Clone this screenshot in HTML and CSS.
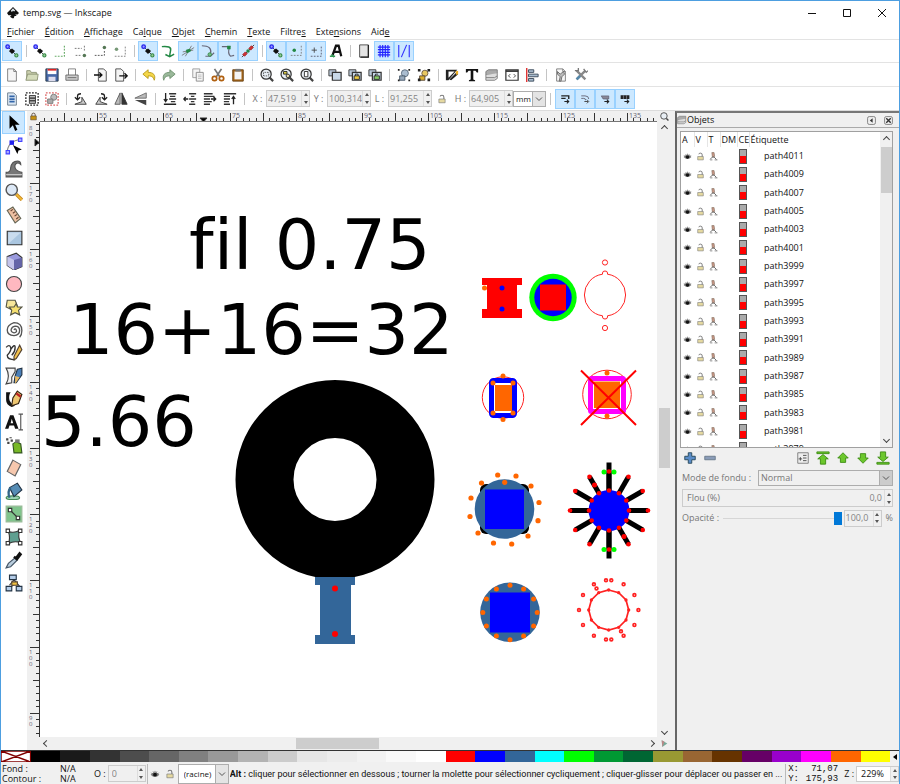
FILE: index.html
```html
<!DOCTYPE html>
<html lang="fr">
<head>
    <meta charset="UTF-8">
    <meta name="viewport" content="width=device-width, initial-scale=1.0">
    <title>temp.svg — Inkscape</title>
    <link rel="stylesheet" href="styles.css">
</head>
<body>
    <div class="window">
        <header class="titlebar">
            <svg class="logo" viewBox="0 0 16 16"><path d="M8 0 16 8 14 10 11 10 13 12 10 12 9 15 7 15 4 13 6 11 2 11 0 8Z" fill="#111"/><path d="M8 1.500 11 5 9.500 6 8 5 6.500 6.500 5 5Z" fill="#dde4ea"/></svg>
            <h1>temp.svg — Inkscape</h1>
            <div class="window-buttons">
                <button type="button" aria-label="Réduire"><svg viewBox="0 0 10 10"><path d="M1 5.500h8"/></svg></button>
                <button type="button" aria-label="Agrandir"><svg viewBox="0 0 10 10"><path d="M1.500 1.500h7v7h-7z"/></svg></button>
                <button type="button" aria-label="Fermer"><svg viewBox="0 0 10 10"><path d="M1 1l8 8M9 1L1 9"/></svg></button>
            </div>
        </header>

        <nav class="menubar">
            <a href="#"><u>F</u>ichier</a>
            <a href="#"><u>É</u>dition</a>
            <a href="#"><u>A</u>ffichage</a>
            <a href="#">Ca<u>l</u>que</a>
            <a href="#"><u>O</u>bjet</a>
            <a href="#"><u>C</u>hemin</a>
            <a href="#"><u>T</u>exte</a>
            <a href="#">Filtre<u>s</u></a>
            <a href="#">Exte<u>n</u>sions</a>
            <a href="#">Aid<u>e</u></a>
        </nav>

        <div class="toolbar snap-bar" data-tools="snap"></div>
        <div class="toolbar" data-tools="commands"></div>
        <div class="toolbar">
            <div class="tool-group" data-tools="select"></div>
            <label class="field-label" for="pos-x">X :</label>
            <div class="spin"><input id="pos-x" type="text" value="47,519" disabled></div>
            <label class="field-label" for="pos-y">Y :</label>
            <div class="spin"><input id="pos-y" type="text" value="100,314" disabled></div>
            <label class="field-label" for="size-w">L :</label>
            <div class="spin"><input id="size-w" type="text" value="91,255" disabled></div>
            <button class="tool ratio" type="button" aria-label="Verrouiller les proportions" data-icon="lock"></button>
            <label class="field-label" for="size-h">H :</label>
            <div class="spin"><input id="size-h" type="text" value="64,905" disabled></div>
            <div class="combo unit">
                <select aria-label="Unité"><option>mm</option><option>px</option></select>
            </div>
            <div class="tool-group affect" data-tools="affect"></div>
        </div>

        <main class="workspace">
            <div class="toolbox" data-tools="toolbox"></div>

            <div class="editor">
                <div class="corner" data-icon="padlock"></div>
                <svg class="ruler-h" id="ruler-h"></svg>
                <div class="corner" data-icon="zoom"></div>

                <svg class="ruler-v" id="ruler-v"></svg>
                <svg class="canvas" id="canvas">
                    <g transform="translate(-40 -122)">
                        <g class="drawing-text">
                            <text x="189" y="269">fil 0.75</text>
                            <text x="69" y="354">16+16=32</text>
                            <text x="41" y="446">5.66</text>
                        </g>

                        <!-- ring and its spool -->
                        <circle cx="335" cy="479.500" r="70.500" fill="none" stroke="#000" stroke-width="58"/>
                        <path d="M315 577h40v8h-4v50h4v9h-40v-9h5v-50h-5z" fill="#369"/>
                        <g fill="#f00"><circle cx="335" cy="588.500" r="3"/><circle cx="335" cy="634" r="3"/></g>

                        <!-- red spool -->
                        <path d="M482 278h40v7h-5v24h5v9h-40v-9h5v-24h-5z" fill="#f00"/>
                        <circle cx="484.500" cy="288" r="2.500" fill="#f60"/>
                        <g fill="#00f"><circle cx="502" cy="288" r="2.500"/><circle cx="502" cy="309" r="2.500"/></g>

                        <!-- green disc -->
                        <circle cx="553" cy="297.500" r="23.700" fill="#0f0"/>
                        <circle cx="553" cy="297.500" r="18.700" fill="#00f"/>
                        <path d="M540 284.500h26v26h-26z" fill="#f00"/>

                        <!-- notched outline -->
                        <g fill="none" stroke="#f22" stroke-width="1">
                            <path d="M607.500 274.200V273a2.500 2 0 0 0-5 0v1.200A21 21 0 0 0 602.500 315.800v1.200a2.500 2 0 0 0 5 0v-1.200A21 21 0 0 0 607.500 274.200Z"/>
                            <circle cx="605" cy="262.500" r="2.600"/><circle cx="605" cy="328" r="2.600"/>
                        </g>

                        <!-- blue frame -->
                        <circle cx="503" cy="397.500" r="20.700" fill="none" stroke="#f22"/>
                        <rect x="491.500" y="380.500" width="23" height="35" rx="2" fill="#fff" stroke="#00f" stroke-width="5"/>
                        <path d="M495 385h17v26h-17z" fill="#f60"/>
                        <g fill="#f60"><circle cx="503" cy="376" r="2.500"/><circle cx="493" cy="383" r="2.500"/><circle cx="513" cy="383" r="2.500"/><circle cx="493" cy="413" r="2.500"/><circle cx="513" cy="413" r="2.500"/><circle cx="503" cy="419.500" r="2.500"/></g>

                        <!-- crossed magenta frame -->
                        <circle cx="607" cy="394.500" r="24.300" fill="none" stroke="#f22"/>
                        <rect x="590.500" y="378.500" width="33" height="33" rx="1" fill="#fff" stroke="#f0f" stroke-width="5"/>
                        <path d="M594 381.500h26v26.500h-26z" fill="#f60"/>
                        <g fill="#f60"><circle cx="607" cy="373" r="2.500"/><circle cx="607" cy="416" r="2.500"/></g>
                        <path d="M581 370.500 636 425M636 370.500 581 425" stroke="#f00" stroke-width="2"/>

                        <!-- steel disc, dots outside -->
                        <rect x="480" y="484" width="49" height="50" rx="6"/>
                        <circle cx="504.500" cy="509" r="29.800" fill="#369"/>
                        <path d="M485 489.500h39v39.500h-39z" fill="#00f"/>
                        <g fill="#f60">
                            <circle cx="497.700" cy="475" r="2.600"/><circle cx="516" cy="476" r="2.600"/><circle cx="481.500" cy="483" r="2.600"/><circle cx="531" cy="486" r="2.600"/><circle cx="539" cy="502.500" r="2.600"/><circle cx="538" cy="520.700" r="2.600"/><circle cx="528" cy="536" r="2.600"/><circle cx="511.700" cy="544" r="2.600"/><circle cx="493.500" cy="543" r="2.600"/><circle cx="478" cy="533" r="2.600"/><circle cx="470" cy="516.500" r="2.600"/><circle cx="471" cy="498" r="2.600"/><circle cx="504.700" cy="482.300" r="2.600"/>
                        </g>

                        <g id="star"></g>

                        <!-- steel disc, dots inside -->
                        <circle cx="510" cy="612.300" r="29.800" fill="#369"/>
                        <path d="M490 592.500h40v40h-40z" fill="#00f"/>
                        <g id="disc-dots" fill="#f60"></g>

                        <g id="burst" fill="none" stroke="#f22" stroke-width="1.700"></g>
                    </g>
                </svg>
                <div class="scroll-v">
                    <span class="arrow up"></span>
                    <span class="thumb"></span>
                    <span class="arrow down"></span>
                </div>

                <div></div>
                <div class="scroll-h">
                    <span class="arrow left"></span>
                    <span class="thumb"></span>
                    <span class="arrow right"></span>
                </div>
                <div class="corner" data-icon="cms"></div>
            </div>

            <aside class="panel">
                <div class="panel-title">
                    <span class="panel-icon" data-icon="layers"></span>
                    <h2>Objets</h2>
                    <button type="button" aria-label="Réduire le panneau" data-icon="dock"></button>
                    <button type="button" aria-label="Fermer le panneau" data-icon="close"></button>
                </div>

                <div class="tree">
                    <div class="tree-view">
                        <table>
                            <thead>
                                <tr><th>A</th><th>V</th><th>T</th><th>DM</th><th>CE</th><th>Étiquette</th></tr>
                            </thead>
                            <tbody id="objects"></tbody>
                        </table>
                    </div>
                    <div class="tree-scroll">
                        <span class="arrow up"></span>
                        <span class="thumb"></span>
                        <span class="arrow down"></span>
                    </div>
                </div>

                <div class="panel-actions" data-tools="objects"></div>

                <div class="panel-row">
                    <label for="blend">Mode de fondu :</label>
                    <div class="combo blend">
                        <select id="blend" disabled><option>Normal</option></select>
                    </div>
                </div>
                <div class="panel-row">
                    <div class="spin blur">
                        <label for="blur">Flou (%)</label>
                        <input id="blur" type="text" value="0,0" disabled>
                    </div>
                </div>
                <div class="panel-row">
                    <label for="opacity">Opacité :</label>
                    <input id="opacity" type="range" min="0" max="100" value="100">
                    <div class="spin opacity"><input type="text" value="100,0" aria-label="Opacité" disabled></div>
                    <span>%</span>
                </div>
            </aside>
        </main>

        <div class="palette">
            <div class="swatches" id="swatches"></div>
            <button class="palette-menu" type="button" aria-label="Palettes"><span class="arrow-solid"></span></button>
        </div>

        <footer class="statusbar">
            <dl class="style-info">
                <dt>Fond :</dt><dd>N/A</dd>
                <dt>Contour :</dt><dd>N/A</dd>
            </dl>
            <label for="master-opacity">O :</label>
            <div class="spin master"><input id="master-opacity" type="text" value="0" disabled></div>
            <div class="layer">
                <button class="tool small" type="button" aria-label="Visibilité du calque" data-icon="eye"></button>
                <button class="tool small" type="button" aria-label="Verrouiller le calque" data-icon="lock"></button>
                <div class="combo root">
                    <select aria-label="Calque"><option>(racine)</option></select>
                </div>
            </div>
            <p class="message"><b>Alt :</b> cliquer pour sélectionner en dessous ; tourner la molette pour sélectionner cycliquement ; cliquer-glisser pour déplacer ou passer en ...</p>
            <dl class="coords">
                <dt>X:</dt><dd>71,07</dd>
                <dt>Y:</dt><dd>175,93</dd>
            </dl>
            <label for="zoom">Z :</label>
            <div class="spin zoom"><input id="zoom" type="text" value="229%"></div>
        </footer>
    </div>
    <script src="script.js"></script>
</body>
</html>
```

FILE: styles.css
```css
* {
    box-sizing: border-box;
}

body {
    margin: 0;
    font-family: "Open Sans", "Noto Sans", sans-serif;
    font-size: 9px;
    line-height: 12px;
    color: #111;
    background-color: #fff;
}

button,
input,
select {
    font: inherit;
    color: inherit;
    margin: 0;
    padding: 0;
    border: none;
    border-radius: 0;
    background: none;
}

svg {
    display: block;
}

h1,
h2,
p,
dl,
dd {
    margin: 0;
    font-size: inherit;
    font-weight: normal;
}

.window {
    display: flex;
    flex-direction: column;
    height: 100vh;
    border: 1px solid #4d9ee0;
    border-bottom: none;
    overflow: hidden;
}

/* Title and menus */
.titlebar {
    display: flex;
    align-items: center;
    height: 23px;
    padding-left: 6px;
    flex: none;
}

.logo {
    width: 12px;
    height: 12px;
    margin-right: 4px;
}

.window-buttons {
    display: flex;
    margin-left: auto;
}

.window-buttons button {
    width: 35px;
    height: 22px;
    display: flex;
    align-items: center;
    justify-content: center;
}

.window-buttons svg {
    width: 10px;
    height: 10px;
    fill: none;
    stroke: #111;
    stroke-width: 1;
}

.menubar {
    display: flex;
    gap: 10px;
    height: 15px;
    padding: 2px 6px 0;
    flex: none;
}

.menubar a {
    color: #111;
    text-decoration: none;
}

/* Toolbars */
.toolbar {
    display: flex;
    align-items: center;
    height: 24px;
    padding-left: 1px;
    border-top: 1px solid #e3e3e3;
    flex: none;
}

.toolbar.snap-bar {
    height: 23px;
}

.tool-group {
    display: flex;
    align-items: center;
}

.tool {
    display: flex;
    align-items: center;
    justify-content: center;
    width: 20px;
    height: 20px;
    flex: none;
}

.tool svg {
    width: 14px;
    height: 14px;
}

.tool.active {
    background-color: #cce8ff;
    border: 1px solid #99d1ff;
}

.tool.small {
    width: 15px;
}

.tool.small svg,
.tool.ratio svg,
.affect .tool svg {
    width: 10px;
    height: 10px;
}

.separator {
    width: 9px;
    height: 12px;
    flex: none;
    background: linear-gradient(#c4c4c4, #c4c4c4) center / 1px 100% no-repeat;
}

.separator.narrow {
    width: 8px;
}

.field-label {
    width: 17px;
    text-align: center;
    color: #777;
}

/* Entry with up and down arrows */
.spin {
    display: flex;
    width: 44px;
    height: 17px;
    border: 1px solid #ccc;
    background-color: #f0f0f0;
    flex: none;
}

.spin input {
    flex: 1;
    min-width: 0;
    padding-left: 1px;
}

.spin input:disabled {
    color: #838383;
}

.spin-buttons {
    display: flex;
    flex-direction: column;
    width: 8px;
    border-left: 1px solid #ddd;
}

.spin-buttons button {
    flex: 1;
    display: flex;
    align-items: center;
    justify-content: center;
}

.spin-buttons button::before {
    content: "";
    border: 2px solid transparent;
    border-top: none;
    border-bottom: 3px solid #555;
}

.spin-buttons button + button::before {
    border-top: 3px solid #555;
    border-bottom: none;
}

/* Drop-down */
.combo {
    position: relative;
    height: 16px;
    border: 1px solid #adadad;
    background-color: #fff;
}

.combo select {
    appearance: none;
    width: 100%;
    height: 100%;
    padding-left: 2px;
    opacity: 1;
}

.combo::after {
    content: "";
    position: absolute;
    top: 0;
    right: 0;
    width: 12px;
    height: 100%;
    border-left: 1px solid #adadad;
    pointer-events: none;
    background: #e4e4e4 url("data:image/svg+xml,%3Csvg xmlns='http://www.w3.org/2000/svg' viewBox='0 0 8 8'%3E%3Cpath d='M1 2.500 4 5.500 7 2.500' fill='none' stroke='%23555'/%3E%3C/svg%3E") center / 8px no-repeat;
}

.combo.unit {
    width: 33px;
}

.combo.unit select {
    font-size: 8px;
}

/* Work area */
.workspace {
    display: flex;
    flex: 1;
    min-height: 0;
    border-top: 1px solid #dcdcdc;
}

.toolbox {
    width: 26px;
    padding-left: 1px;
    flex: none;
}

.toolbox .tool {
    width: 23px;
    height: 23px;
}

.toolbox .tool svg {
    width: 18px;
    height: 18px;
}

.editor {
    display: grid;
    grid-template-columns: 13px 1fr 14px;
    grid-template-rows: 11px 1fr 13px;
    flex: 1;
    min-width: 0;
    background-color: #f0f0f0;
}

.corner {
    display: flex;
    align-items: center;
    justify-content: center;
}

.corner svg {
    width: 9px;
    height: 9px;
}

.ruler-h,
.ruler-v {
    width: 100%;
    height: 100%;
    overflow: hidden;
    fill: #667;
}

.ruler-h {
    border-bottom: 1px solid #777;
    font-size: 7px;
}

.ruler-v {
    border-right: 1px solid #333;
    font-size: 6px;
}

.ruler-h path,
.ruler-v path {
    stroke: #333;
    stroke-width: 1;
}

.marker {
    fill: #000;
}

.canvas {
    width: 100%;
    height: 100%;
    background-color: #fff;
    overflow: hidden;
}

.drawing-text {
    font-family: "DejaVu Sans", sans-serif;
    font-size: 70px;
    font-variant-ligatures: none;
}

.scroll-v,
.tree-scroll {
    display: grid;
    grid-template-rows: 12px 1fr 12px;
    justify-items: center;
    align-items: center;
    background-color: #f0f0f0;
}

.scroll-v .thumb {
    width: 11px;
    height: 10%;
    margin-top: 17px;
    background-color: #cdcdcd;
}

.scroll-h {
    display: grid;
    grid-template-columns: 12px 1fr 12px;
    justify-items: center;
    align-items: center;
}

.scroll-h .thumb {
    width: 14%;
    height: 11px;
    margin-right: 22px;
    background-color: #cdcdcd;
}

.arrow {
    width: 5px;
    height: 5px;
    border: solid #444;
    border-width: 1px 0 0 1px;
}

.arrow.up {
    transform: rotate(45deg);
}

.arrow.right {
    transform: rotate(135deg);
}

.arrow.down {
    transform: rotate(225deg);
}

.arrow.left {
    transform: rotate(315deg);
}

/* Objects panel */
.panel {
    width: 224px;
    margin-left: 4px;
    border-left: 2px solid #666;
    border-top: 2px solid #777;
    background-color: #f0f0f0;
    box-shadow: -4px 0 #f0f0f0;
    flex: none;
}

.panel-title {
    display: flex;
    align-items: center;
    height: 15px;
    padding-right: 6px;
    border-bottom: 1px solid #aaa;
}

.panel-icon svg {
    width: 10px;
    height: 10px;
}

.panel-title h2 {
    flex: 1;
}

.panel-title button {
    margin-left: 8px;
}

.panel-title button svg {
    width: 9px;
    height: 9px;
}

.tree {
    display: flex;
    height: 317px;
    margin: 3px 6px 0 3px;
    border: 1px solid #a0a0a0;
    background-color: #fff;
}

.tree-view {
    flex: 1;
    overflow: hidden;
}

.tree-scroll {
    width: 12px;
    grid-template-rows: 15px 1fr 15px;
}

.tree-scroll .thumb {
    width: 11px;
    height: 46px;
    align-self: start;
    background-color: #cdcdcd;
}

.tree table {
    width: 100%;
    table-layout: fixed;
    border-collapse: collapse;
}

.tree th {
    height: 15px;
    padding: 0 0 0 1px;
    font-weight: normal;
    text-align: left;
    white-space: nowrap;
    border-right: 1px solid #e5e5e5;
}

.tree th:nth-child(-n + 3) {
    width: 13px;
}

.tree th:nth-child(4) {
    width: 17px;
}

.tree th:nth-child(5) {
    width: 12px;
}

.tree th:last-child {
    border-right: none;
}

.tree td {
    height: 18px;
    padding: 0 0 0 2px;
}

.tree tr:nth-child(3n) td {
    height: 19px;
}

.tree td svg {
    width: 9px;
    height: 9px;
}

.tree td:last-child {
    padding-left: 15px;
}

.color-tag {
    display: block;
    width: 8px;
    height: 15px;
    border: 1px solid #555;
    background: linear-gradient(#aaa 50%, #f00 50%);
}

.panel-actions {
    display: flex;
    height: 20px;
    padding: 0 6px 0 3px;
}

.panel-actions .tool:nth-child(3) {
    margin-left: auto;
}

.panel-row {
    display: flex;
    align-items: center;
    gap: 4px;
    height: 20px;
    padding: 0 6px 0 5px;
    color: #777;
}

.combo.blend {
    flex: 1;
    margin-left: 3px;
    background-color: #f0f0f0;
}

.combo.blend::after {
    background-color: #ccc;
}

.spin.blur {
    flex: 1;
    height: 18px;
    line-height: 16px;
    padding-left: 4px;
}

.spin.blur input {
    text-align: right;
    padding-right: 2px;
}

#opacity {
    appearance: none;
    flex: 1;
    min-width: 0;
    height: 13px;
    background: linear-gradient(#d6d6d6, #d6d6d6) center / 100% 1px no-repeat;
}

#opacity::-webkit-slider-thumb {
    appearance: none;
    width: 8px;
    height: 13px;
    background-color: #0078d7;
}

.spin.opacity {
    width: 38px;
    margin-left: -2px;
}

/* Palette */
.palette {
    display: flex;
    height: 13px;
    border-top: 1px solid #333;
    background-color: #f0f0f0;
    flex: none;
}

.swatches {
    display: flex;
    flex: 1;
    height: 11px;
}

.swatch {
    flex: 1 1 0;
    min-width: 0;
}

.swatch svg {
    width: 100%;
    height: 100%;
    background-color: #fff;
}

.palette-menu {
    width: 9px;
    padding-left: 3px;
}

.arrow-solid {
    display: block;
    width: 0;
    border: 3px solid transparent;
    border-left: none;
    border-right: 4px solid #000;
}

/* Status bar */
.statusbar {
    display: flex;
    align-items: center;
    height: 21px;
    background-color: #f0f0f0;
    flex: none;
}

.style-info,
.coords {
    display: grid;
    line-height: 10px;
    flex: none;
}

.style-info {
    grid-template-columns: 58px 34px;
    padding-left: 1px;
}

.spin.master {
    width: 38px;
    margin-left: 2px;
}

.spin.master input {
    padding-left: 3px;
}

.layer {
    display: flex;
    align-items: center;
    margin-left: 1px;
    border-left: 1px solid #bbb;
}

.combo.root {
    width: 51px;
    height: 20px;
    font-size: 8px;
}

.combo.root select {
    padding-left: 5px;
}

.message {
    flex: 1;
    min-width: 0;
    margin-left: 1px;
    font-family: Roboto, "Open Sans", sans-serif;
    white-space: nowrap;
    overflow: hidden;
    text-overflow: ellipsis;
}

.coords {
    grid-template-columns: 14px 36px;
    padding-left: 2px;
    margin-right: 6px;
    border-left: 1px solid #bbb;
    font-family: "Liberation Mono", monospace;
}

.coords dd {
    text-align: right;
}

.spin.zoom {
    width: 43px;
    height: 16px;
    margin-left: 2px;
    background-color: #fff;
}

.spin.zoom input {
    padding-left: 4px;
}

.spin.zoom .spin-buttons {
    background-color: #f0f0f0;
}
```

FILE: script.js
```js
// Icons, drawn on a 16 x 16 grid
const page = '<path d="M3 1h7l3 3v11H3z" fill="#f6f6f6" stroke="#777"/><path d="M10 1v3h3" fill="none" stroke="#777"/>';
const nodes = '<path d="M3 3 13 13" stroke="#333"/><circle cx="3" cy="3" r="2" fill="#99f" stroke="#22e" stroke-width="1.500"/><path d="M8 5l3.500 3L8 11.500 4.500 8z" fill="#111"/><circle cx="13" cy="13" r="1.800" fill="#9c9" stroke="#384" stroke-width="1.300"/>';
const glass = '<path d="M11 11l4 4" stroke="#444" stroke-width="2.500"/><circle cx="7" cy="7" r="5.800" fill="#e8eef4" stroke="#333" stroke-width="1.400"/>';
const squares = '<path d="M1 2h8v7H1z" fill="#b8c6d6" stroke="#333"/><path d="M5 5h10v9H5z" fill="#c8d8e8" stroke="#333" stroke-width="1.400"/>';
const dashedBox = '<path d="M1 1h14v14H1z" fill="none" stroke="#222" stroke-width="1.500" stroke-dasharray="2 1.500"/>';
const handles = '<path d="M1 1h3v3H1zM12 1h3v3h-3zM1 12h3v3H1zM12 12h3v3h-3z" fill="#222"/>';
const lines = '<path d="M7 2h8M9 5h4M7 8h8M9 11h4M7 14h7" stroke="#333" stroke-width="1.500"/>';

const icons = {
    'snap': nodes,
    'snap-bbox': nodes,
    'snap-edge': '<path d="M13 2v12H2" fill="none" stroke="#6a6" stroke-width="1.300" stroke-dasharray="2 1.500"/>',
    'snap-corner': '<path d="M2 5h8M13 2v7M3 13h7" fill="none" stroke="#666" stroke-dasharray="2 1.500"/><circle cx="13" cy="13" r="2" fill="#575"/>',
    'snap-mid': '<path d="M2 13h11V7" fill="none" stroke="#444" stroke-dasharray="2 1.500"/><circle cx="13" cy="4" r="2" fill="#575"/>',
    'snap-center': '<path d="M2 14h12V2" fill="none" stroke="#777" stroke-dasharray="2 1.500"/><circle cx="4" cy="6" r="2" fill="#797"/>',
    'snap-path': '<path d="M1 3q11-1 10 4t-1 7M5 12l5 2.500 5-3" fill="none" stroke="#284" stroke-width="1.700"/>',
    'snap-cross': '<path d="M1 13 15 4M2 9l12-2M5 14l7-12" stroke="#777"/><path d="M6 7l4-1 1 2-4 2z" fill="#284" stroke="#284"/>',
    'snap-cusp': '<path d="M1 2q12 0 10 9M5 14h6l4-4" fill="none" stroke="#667" stroke-width="1.300"/><circle cx="10" cy="12" r="2" fill="#7b8" stroke="#384"/>',
    'snap-smooth': '<path d="M1 3h9q-3 8 1 11l4-1" fill="none" stroke="#667" stroke-width="1.300"/><path d="M7 2h4v4H7z" fill="#284"/>',
    'snap-line': '<path d="M1 15 15 1" stroke="#333"/><path d="M2 12l3-3 2 2-3 3zM9 5l3-3 2 2-3 3z" fill="#c33" stroke="#a22"/><circle cx="8" cy="8" r="2" fill="#284"/>',
    'snap-object': '<path d="M2 13h12V2" fill="none" stroke="#777" stroke-dasharray="2 1.500"/><circle cx="6" cy="7" r="2" fill="#284"/>',
    'snap-rotation': '<path d="M2 14h12V2" fill="none" stroke="#556" stroke-dasharray="2 1.500"/><path d="M6 4v6M3 7h6" stroke="#444"/>',
    'snap-text': '<path d="M4 13 8 2h3l3 12M6 9h7" fill="none" stroke="#111" stroke-width="2.600"/><path d="M1 14h6M3 12l3 3" stroke="#395" stroke-width="1.700"/>',
    'snap-page': '<path d="M3 1h10v14H3z" fill="#e4e4e4" stroke="#444"/><path d="M13 1v14H4" fill="none" stroke="#222" stroke-width="1.500"/>',
    'snap-grid': '<path d="M1 3.500h14M1 6.500h14M1 9.500h14M1 12.500h14M3.500 1v14M6.500 1v14M9.500 1v14M12.500 1v14" stroke="#22f" stroke-width="1.300"/>',
    'snap-guide': '<path d="M2 1v14M14 1v14M5 15 11 1" stroke="#33f" stroke-width="1.300"/>',

    'new': page,
    'open': '<path d="M2 13V3h4l1 2h6v3" fill="#ccd0b0" stroke="#889070"/><path d="M1 14 3 7h12l-1 7z" fill="#d5dcbb" stroke="#889070"/>',
    'save': '<path d="M1 1h14v14H1z" fill="#4668a8" stroke="#234"/><path d="M3 1h10v6H3z" fill="#fff"/><path d="M3 1h10v2H3z" fill="#d22"/><path d="M4 10h8v5H4z" fill="#dde"/>',
    'print': '<path d="M4 8V1h8v7" fill="#fff" stroke="#777"/><path d="M1 8h14v6H1z" fill="#ccc" stroke="#666"/><path d="M3 11h10" stroke="#666"/>',
    'import': '<path d="M5 1h6l3 3v11H5z" fill="#f4f4f4" stroke="#444"/><path d="M0 8h8M6 5l3 3-3 3" fill="none" stroke="#111" stroke-width="1.600"/>',
    'export': '<path d="M2 1h6l3 3v11H2z" fill="#f4f4f4" stroke="#444"/><path d="M6 9h8M12 6l3 3-3 3" fill="none" stroke="#111" stroke-width="1.600"/>',
    'undo': '<path d="M1 7 7 2v3c6 0 9 3 7 9-1-4-3-5-7-5v3z" fill="#f4d648" stroke="#b59616"/>',
    'redo': '<path d="M15 7 9 2v3C3 5 0 8 2 14c1-4 3-5 7-5v3z" fill="#9ab89a" stroke="#6d906d"/>',
    'copy': '<path d="M2 1h8v10H2z" fill="#f4f4f4" stroke="#999"/><path d="M6 5h8v10H6z" fill="#f4f4f4" stroke="#888"/><path d="M8 8h4M8 10h4M8 12h4" stroke="#bbb"/>',
    'cut': '<path d="M4 1l6 9M12 1 6 10" stroke="#777" stroke-width="2"/><circle cx="4" cy="12" r="2.500" fill="none" stroke="#b06010" stroke-width="2"/><circle cx="12" cy="12" r="2.500" fill="none" stroke="#b06010" stroke-width="2"/>',
    'paste': '<path d="M2 2h12v13H2z" fill="#a8681c" stroke="#643c0c"/><path d="M4 4h8v9H4z" fill="#f4f4f4"/><path d="M5 1h6v3H5z" fill="#777"/>',
    'zoom-sel': glass + '<path d="M4 5h6v4H4z" fill="none" stroke="#333" stroke-dasharray="1 1"/>',
    'zoom-draw': glass + '<path d="M4 4h4v3H4z" fill="#dc4" stroke="#222"/><circle cx="9" cy="9" r="2" fill="#eda" stroke="#222"/>',
    'zoom-page': glass + '<path d="M5 4h4v6H5z" fill="#fff" stroke="#222"/>',
    'duplicate': squares,
    'clone': squares + '<path d="M7 9h6v4H7z" fill="#ec4" stroke="#222"/><path d="M8.500 9V7h3v2" fill="none" stroke="#222"/>',
    'unlink': squares + '<path d="M7 9h6v4H7z" fill="#8c6" stroke="#222"/><path d="M8.500 9V7h3" fill="none" stroke="#222"/>',
    'group': '<circle cx="9" cy="6" r="4" fill="#aabdd0" stroke="#567"/><path d="M3 9h6v5H3z" fill="#98aabd" stroke="#456"/><path d="M1 1h2v2H1zM13 1h2v2h-2zM1 13h2v2H1zM13 13h2v2h-2z" fill="#222"/>',
    'ungroup': '<circle cx="9" cy="6" r="3.500" fill="#e9c860" stroke="#654"/><path d="M3 9h6v5H3z" fill="#dcb030" stroke="#543"/>' + handles,
    'fill-stroke': '<path d="M1 2h13L4 14H1z" fill="#222"/><path d="M4 4h7l-7 7z" fill="#fff"/><path d="M5 13 13 5l2 2-8 7z" fill="#222"/><path d="M12 4l3-1v4l-2 1z" fill="#f0b020"/>',
    'text-dialog': '<path d="M1 1h14v4h-1.500L12 3H9.500v10l2 1v1h-7v-1l2-1V3H4L2.500 5H1z" fill="#111"/>',
    'layers': '<path d="M4 2h10v4l-3 2H1V4z" fill="#aaa" stroke="#777"/><path d="M1 8v3h10l3-2V6M1 11v3h10l3-2V9" fill="#ddd" stroke="#777"/>',
    'xml': '<path d="M1 2h14v12H1z" fill="#fff" stroke="#333" stroke-width="1.400"/><path d="M1 3.500h14" stroke="#333" stroke-width="2"/><path d="M6 7 4 9l2 2M10 7l2 2-2 2" fill="none" stroke="#333"/>',
    'align': '<path d="M2 0v16" stroke="#d22" stroke-width="1.500"/><path d="M4 2h6v3H4zM4 7h11v3H4zM4 12h6v3H4z" fill="#a9bccf" stroke="#345"/>',
    'doc-prefs': page + '<path d="M4 4l3 3 4-3 1 3-3 3-1 5H6l1-5-3-3z" fill="#bbb" stroke="#666"/>',
    'prefs': '<path d="M3 3l10 10M13 3 3 13" stroke="#888" stroke-width="2.600"/><path d="M3 13l4-4" stroke="#58a" stroke-width="3"/><path d="M1 3h4V0M11 1l3 4 2-2" fill="none" stroke="#777" stroke-width="1.500"/>',

    'select-layers': '<path d="M3 1h7l3 3v11H3z" fill="#dce8f4" stroke="#678"/><path d="M5 5h6M5 8h6M5 11h6" stroke="#36a" stroke-width="2"/>',
    'select-all': dashedBox + '<path d="M5 4h7v3H5zM5 7h7v3H5zM5 10h7v3H5z" fill="#bbb" stroke="#333"/>',
    'deselect': '<path d="M1 1h14v14H1z" fill="none" stroke="#d66" stroke-width="1.500" stroke-dasharray="2 1.500"/><circle cx="10" cy="6" r="3.500" fill="#bbb" stroke="#777"/><path d="M3 8h6v5H3z" fill="#aaa" stroke="#777"/>',
    'rotate-left': '<path d="M4 9V5q0-3 4-3M1 6l3 3 3-3" fill="none" stroke="#222" stroke-width="1.500"/><path d="M1 14h13L9 6v5z" fill="#ccc" stroke="#333"/>',
    'rotate-right': '<path d="M12 9V5q0-3-4-3M9 6l3 3 3-3" fill="none" stroke="#222" stroke-width="1.500"/><path d="M15 14H2l5-8v5z" fill="#ccc" stroke="#333"/>',
    'flip-h': '<path d="M7 1v13H1z" fill="#bbb" stroke="#555"/><path d="M9 1v13h6z" fill="#333" stroke="#333"/>',
    'flip-v': '<path d="M1 7h13V1z" fill="#bbb" stroke="#666"/><path d="M1 9h13v6z" fill="#444"/>',
    'lower-bottom': '<path d="M3 1v10M1 8l2 3 2-3M1 14h14" fill="none" stroke="#222" stroke-width="1.500"/><path d="M7 2h8M8 5h6M7 8h8M9 11h5" stroke="#333" stroke-width="1.500"/>',
    'lower': lines + '<path d="M6 8H1M3 5.500 1 8l2 2.500" fill="none" stroke="#222" stroke-width="1.500"/>',
    'raise': '<path d="M1 2h10M1 5h12M1 8h7M1 11h9M1 14h7" stroke="#333" stroke-width="1.500"/><path d="M9 8h5M12 5.500l2.500 2.500-2.500 2.500" fill="none" stroke="#222" stroke-width="1.500"/>',
    'raise-top': '<path d="M1 2h14M1 5h7M1 8h7M1 11h6M1 14h7" stroke="#333" stroke-width="1.500"/><path d="M12 14V5M10 8l2-3 2 3" fill="none" stroke="#222" stroke-width="1.500"/>',
    'affect-stroke': '<path d="M2 3h12v5M2 7h7" fill="none" stroke="#222" stroke-width="2.200"/><path d="M7 12h6M11 9l3 3-3 3" fill="none" stroke="#222" stroke-width="1.700"/>',
    'affect-corner': '<path d="M2 3h6q6 0 6 5M2 7h4q3 0 3 3" fill="none" stroke="#667" stroke-width="1.500"/><path d="M7 12h6M11 9l3 3-3 3" fill="none" stroke="#444" stroke-width="1.500"/>',
    'affect-gradient': '<path d="M2 3h12v5H5z" fill="#889" stroke="#556"/><path d="M7 12h6M11 9l3 3-3 3" fill="none" stroke="#222" stroke-width="1.700"/>',
    'affect-pattern': '<path d="M1 2h14v6H1z" fill="#222"/><path d="M5.500 2v6M10.500 2v6" stroke="#99a"/><path d="M7 12h6M11 9l3 3-3 3" fill="none" stroke="#222" stroke-width="1.700"/>',

    'lock': '<path d="M3 8h10v6H3z" fill="#e5d9a0" stroke="#777"/><path d="M5 4q0-2 3-2t3 3v3" fill="none" stroke="#777" stroke-width="1.700"/>',
    'padlock': '<path d="M3 7h10v7H3z" fill="#c69214" stroke="#543"/><path d="M5 7V5q0-3 3-3t3 3v2" fill="none" stroke="#543" stroke-width="1.500"/>',
    'eye': '<path d="M1 9q7-8 14 0-7 7-14 0z" fill="#777"/><circle cx="8" cy="9" r="3" fill="#111"/><path d="M2 6l2 2M5 4l1 2M8 3v2M11 4l-1 2M14 6l-2 2" stroke="#333"/>',
    'key': '<path d="M5 1h4l1 7-4 1z" fill="#c98" stroke="#765"/><path d="M2 13l4-4h3l4 4" fill="none" stroke="#555" stroke-width="1.500"/><path d="M2 14h4M10 14h5" stroke="#333"/>',
    'cms': '<path d="M3 2l10 6-9 6z" fill="#7a9"/><path d="M3 2l5 3-4 9z" fill="#b88"/>',
    'dock': '<rect x="1" y="1" width="14" height="14" rx="3" fill="#eee" stroke="#777" stroke-width="1.500"/><path d="M10 4v8L5 8z" fill="#333"/>',
    'close': '<rect x="1" y="1" width="14" height="14" rx="3" fill="#eee" stroke="#777" stroke-width="1.500"/><path d="M4 4l8 8M12 4l-8 8" stroke="#333" stroke-width="2.500"/>',

    'tool-select': '<path d="M4 1v12l3-3 2 5 2-1-2-4.500h4z" fill="#000"/>',
    'tool-node': '<path d="M2 14Q2 4 14 2" fill="none" stroke="#888"/><path d="M4 3h4v4H4z" fill="#22e"/><path d="M12 1h3v3h-3zM1 12h3v3H1z" fill="#aaf" stroke="#44f"/><path d="M7 7l8 4-3 1-1 3z" fill="#000"/>',
    'tool-tweak': '<path d="M1 15v-4q4 0 4-4 1-6 6-6 3 0 3 3-2-2-4-1-2 2-1 4 1 3 6 4v4z" fill="#777" stroke="#555"/><path d="M1 13h14" stroke="#ccc"/>',
    'tool-zoom': '<path d="M10 10l5 5" stroke="#c8871c" stroke-width="3"/><path d="M10 10l5 5" stroke="#f2bc3a" stroke-width="1.500"/><circle cx="6" cy="6" r="5" fill="#dce8f6" stroke="#555" stroke-width="1.300"/>',
    'tool-measure': '<path d="M2 4l5-3 7 10-5 4z" fill="#edc0a2" stroke="#665"/><path d="M7 3 5 4.500M9 5 7 6.500M10.500 7.500l-2 1.500M12 10l-2 1.500" stroke="#643"/>',
    'tool-rect': '<path d="M2 2h13v12H2z" fill="#aac6e0" stroke="#333"/><path d="M3 3h11L3 13z" fill="#c9dcee"/>',
    'tool-box': '<path d="M2 4 10 1l5 4v8l-7 3-6-4z" fill="#99d" stroke="#333"/><path d="M2 4l6 3v9l-6-4z" fill="#c4c4ea"/><path d="M8 7l7-2v8l-7 3z" fill="#6464a8"/>',
    'tool-circle': '<circle cx="8" cy="8" r="6.700" fill="#ffb8c0" stroke="#444"/>',
    'tool-star': '<path d="M2 2h7l2 5-4 4-6-3z" fill="#f6e69a" stroke="#554"/><path d="M10 5l1 3h4l-3 3 1 4-4-2-4 2 1-4-2-3h4z" fill="#f6e070" stroke="#554"/>',
    'tool-spiral': '<path d="M8 8q1-2 2 0t-2 2.500Q5 10 5.500 7.500T9 4.500q4 0 4 4T8 13Q2 12.500 2 8t6-6.500q7 0 7 7 0 4-2 6" fill="none" stroke="#555" stroke-width="1.200"/>',
    'tool-pencil': '<path d="M1 3q3-3 4 0t-3 7q0 4 7 4M5 5q4-6 4-2t-3 7" fill="none" stroke="#333" stroke-width="1.200"/><path d="M13 1l2 4-5 8-2 1v-3z" fill="#f4c24c" stroke="#543"/>',
    'tool-bezier': '<path d="M1 1h8v3L6 9v5L1 15q4-7 0-14z" fill="#f3f3f3" stroke="#444"/><path d="M11 2l4-1v6l-5 7-2 0 1-6z" fill="#4a7fb8" stroke="#234"/><path d="M9 8l4 1-4 6z" fill="#e8b860"/>',
    'tool-calligraphy': '<path d="M1 2h4q-2 3-1 7 2 4 5 5l-3 1Q1 13 1 9z" fill="#111"/><path d="M11 1l4 3-3 8-6 2 1-7z" fill="#edc670" stroke="#321"/><path d="M10 3l4 3" stroke="#b22" stroke-width="2"/>',
    'tool-text': '<path d="M0 14 4.500 2h3L12 14H9l-1-3H4l-1 3zM5 9h2.300L6 5z" fill="#111"/><path d="M12 1h4M12 15h4M14 1v14" stroke="#555"/>',
    'tool-spray': '<path d="M7 7l3-2 4 2 1 8H8z" fill="#78b828" stroke="#352"/><path d="M9 3h4v3H9z" fill="#777"/><path d="M1 2h2v2H1zM4 1h2v1H4zM5 3h2v2H5zM2 5h2v2H2z" fill="#444"/>',
    'tool-eraser': '<path d="M7 1l7 4-5 10-7-4z" fill="#f6c8ae" stroke="#666"/>',
    'tool-bucket': '<ellipse cx="7" cy="14" rx="6" ry="1.700" fill="#9cd4b4" stroke="#485"/><path d="M4 5l7-4 4 6-7 6z" fill="#568cb4" stroke="#234"/><path d="M5 5q-3 3-1 9" fill="none" stroke="#368" stroke-width="2"/>',
    'tool-gradient': '<path d="M1 1h14v14H1z" fill="#80c48c" stroke="#9b9"/><path d="M4 4l8 8" stroke="#333"/><path d="M3 3h3v3H3zM10 10h3v3h-3z" fill="#fff" stroke="#333"/>',
    'tool-mesh': '<path d="M3 3q5 2 10-1-2 6 1 11-6-2-11 1 2-5 0-11z" fill="#5f9f90" stroke="#333"/><path d="M1 1h3v3H1zM12 1h3v3h-3zM1 12h3v3H1zM12 12h3v3h-3z" fill="#fff" stroke="#333"/>',
    'tool-dropper': '<path d="M1 15l2-4 6-5 2 2-6 6z" fill="#b9cddd" stroke="#456"/><path d="M8 5l3 3M10 6l3-4 1 1-3 4z" stroke="#111" stroke-width="2" fill="#111"/>',
    'tool-connector': '<path d="M4 10 8 5l5 6M4 12l5-3" fill="none" stroke="#333"/><path d="M4 1h6v4H4zM1 11h5v4H1zM10 11h5v4h-5z" fill="#b4cce8" stroke="#234"/><path d="M6 7h5v3H6z" fill="#f0c040" stroke="#543"/>',

    'plus': '<path d="M6 2h4v4h4v4h-4v4H6v-4H2V6h4z" fill="#5a8cc8" stroke="#245"/>',
    'minus': '<path d="M2 6h12v4H2z" fill="#8a9cb8" stroke="#678"/>',
    'collapse': '<path d="M2 2h12v12H2z" fill="#eee" stroke="#777"/><path d="M8 5h4M8 8h4M8 11h4M3 9h4M5 7v4" stroke="#444"/>',
    'to-top': '<path d="M1 1h14v2H1zM8 4l6 5h-3v6H5V9H2z" fill="#6cc72c" stroke="#3a8a10"/>',
    'up': '<path d="M8 2l6 6h-3v5H5V8H2z" fill="#6cc72c" stroke="#3a8a10"/>',
    'down': '<path d="M8 14 2 8h3V3h6v5h3z" fill="#6cc72c" stroke="#3a8a10"/>',
    'to-bottom': '<path d="M1 13h14v2H1zM8 12 2 7h3V1h6v6h3z" fill="#6cc72c" stroke="#3a8a10"/>'
};
icons['zoom'] = glass;

function svg(name) {
    return `<svg viewBox="0 0 16 16" aria-hidden="true">${icons[name]}</svg>`;
}

// "*" marks a pressed button, "|" a separator and "!" a narrow one
const toolSets = {
    snap: '*snap ! snap-bbox snap-edge snap-corner snap-mid snap-center ! *snap snap-path *snap-cross *snap-cusp *snap-smooth *snap-line ! *snap-bbox *snap-object *snap-rotation snap-text ! snap-page *snap-grid *snap-guide',
    commands: 'new open save print | import export ! undo redo | copy cut paste | zoom-sel zoom-draw zoom-page ! duplicate clone unlink | group ungroup ! fill-stroke text-dialog layers xml align | doc-prefs prefs',
    select: 'select-layers select-all deselect | rotate-left rotate-right flip-h flip-v | lower-bottom lower raise raise-top |',
    affect: '| *affect-stroke *affect-corner *affect-gradient *affect-pattern',
    toolbox: '*tool-select tool-node tool-tweak tool-zoom tool-measure tool-rect tool-box tool-circle tool-star tool-spiral tool-pencil tool-bezier tool-calligraphy tool-text tool-spray tool-eraser tool-bucket tool-gradient tool-mesh tool-dropper tool-connector',
    objects: 'plus minus collapse to-top up down to-bottom'
};

document.querySelectorAll('[data-tools]').forEach(bar => {
    bar.innerHTML = toolSets[bar.dataset.tools].split(' ').map(item => {
        if (item === '|') return '<span class="separator"></span>';
        if (item === '!') return '<span class="separator narrow"></span>';
        const active = item.startsWith('*');
        const name = active ? item.slice(1) : item;
        return `<button class="tool${active ? ' active' : ''}" type="button" aria-label="${name}">${svg(name)}</button>`;
    }).join('');
});

document.querySelectorAll('[data-icon]').forEach(el => {
    el.innerHTML = svg(el.dataset.icon);
});

document.querySelectorAll('.spin').forEach(spin => {
    spin.insertAdjacentHTML('beforeend',
        '<span class="spin-buttons"><button type="button" aria-label="Augmenter"></button><button type="button" aria-label="Diminuer"></button></span>');
});

// Objects list
const paths = [4011, 4009, 4007, 4005, 4003, 4001, 3999, 3997, 3995, 3993, 3991, 3989, 3987, 3985, 3983, 3981, 3979];
document.getElementById('objects').innerHTML = paths.map(id =>
    `<tr><td>${svg('eye')}</td><td>${svg('lock')}</td><td>${svg('key')}</td><td></td><td><span class="color-tag"></span></td><td>path${id}</td></tr>`
).join('');

// Palette
const colors = ['none', '#000', '#1a1a1a', '#333', '#4d4d4d', '#666', '#808080', '#999', '#b3b3b3', '#ccc', '#e6e6e6', '#ececec', '#f2f2f2', '#f9f9f9', '#fff',
    '#f00', '#00f', '#369', '#0ff', '#0f0', '#093', '#063', '#993', '#963', '#630', '#606', '#90c', '#f0f', '#f60', '#ff0'];
document.getElementById('swatches').innerHTML = colors.map(color => color === 'none'
    ? '<div class="swatch"><svg viewBox="0 0 30 11" preserveAspectRatio="none"><path d="M0 0 30 11M30 0 0 11M0 0h30v11H0z" fill="none" stroke="#800000" stroke-width="1.500"/></svg></div>'
    : `<div class="swatch" style="background-color: ${color}"></div>`
).join('');

// Rulers: one tick per millimetre, a long one every five
const step = 6.62;

function buildRulers() {
    const rulerH = document.getElementById('ruler-h');
    const rulerV = document.getElementById('ruler-v');
    const width = rulerH.getBoundingClientRect().width;
    const height = rulerV.getBoundingClientRect().height;

    let h = '';
    for (let i = -3; 24 + i * step < width; i++) {
        const x = Math.round(24 + i * step);
        h += `<path d="M${x + 0.5} 11v-${i % 5 === 0 ? 9 : 4}"/>`;
        if (i > 0 && i % 10 === 5 && x + 14 < width) h += `<text x="${x + 2}" y="7">${50 + i}</text>`;
    }
    rulerH.innerHTML = h + '<path class="marker" d="M160 7h7l-3.500 4z"/>';

    let v = '';
    for (let i = 0; i * step - 5 < height; i++) {
        const y = Math.round(-5 + i * step);
        v += `<path d="M12 ${y + 0.5}h-${i % 10 === 0 ? 9 : i % 5 === 0 ? 6 : 3}"/>`;
        if (i % 10 === 0) {
            String(180 - i).split('').forEach((digit, n) => {
                const base = y + 7 + n * 6;
                if (base > 6 && base < height) v += `<text x="2" y="${base}">${digit}</text>`;
            });
        }
    }
    rulerV.innerHTML = v + '<path class="marker" d="M8 17v7l4-3.500z"/>';
}
buildRulers();
window.addEventListener('resize', buildRulers);

// Points spread round a centre
function around(cx, cy, r, count) {
    return Array.from({ length: count }, (_, i) => {
        const angle = i * 2 * Math.PI / count;
        return [cx + r * Math.sin(angle), cy - r * Math.cos(angle)];
    });
}

function dots(points, r) {
    return points.map(([x, y]) => `<circle cx="${x.toFixed(1)}" cy="${y.toFixed(1)}" r="${r}"/>`).join('');
}

const inner = around(609, 510.500, 20, 12);
const outer = around(609, 510.500, 39, 12);
document.getElementById('star').innerHTML =
    '<g stroke="#000" stroke-width="5">' + outer.map(([x, y]) => `<path d="M609 510.500 ${x} ${y}"/>`).join('') + '<path d="M609 462.500v96"/></g>' +
    '<circle cx="609" cy="510.500" r="20.500" fill="#00f"/>' +
    '<g fill="#0f0">' + dots([[604, 472], [614, 472], [604, 549.500], [614, 549.500]], 2.500) + '</g>' +
    '<g fill="#f00">' + dots(inner, 2.300) + dots(outer, 2.300) + dots([[594.500, 485], [624, 536.500]], 2.500) + '</g>';

document.getElementById('disc-dots').innerHTML = dots(around(510, 612.500, 27.200, 12), 2.500);

const ring = around(608.700, 610, 20, 12);
const rays = around(608.700, 610, 29.700, 12).filter((_, i) => i % 6 !== 0);
document.getElementById('burst').innerHTML =
    `<path d="M${ring.map(p => p.map(n => n.toFixed(1)).join(' ')).join('L')}Z"/>` +
    dots(ring, 0.800) + dots(rays, 1.400) +
    dots([[606, 580.300], [611.300, 580.300], [606, 639.500], [611.300, 639.500], [596.500, 588.500], [621, 631.300]], 1.400);
```
